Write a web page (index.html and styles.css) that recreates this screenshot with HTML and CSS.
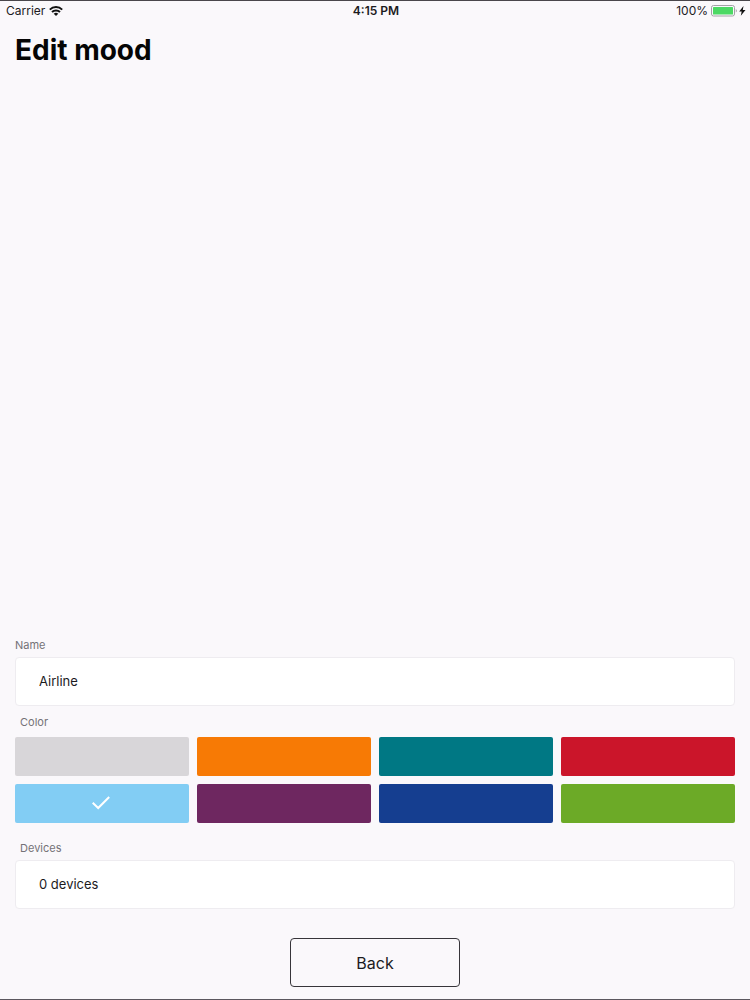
FILE: index.html
```html
<!DOCTYPE html>
<html lang="en">
<head>
<meta charset="utf-8">
<meta name="viewport" content="width=device-width, initial-scale=1">
<title>Edit mood</title>
<link rel="stylesheet" href="styles.css">
</head>
<body>
<div class="screen">
  <header class="status">
    <div class="status-left">
      <span>Carrier</span>
      <svg class="wifi" viewBox="0 0 14 10" aria-hidden="true">
        <path d="M.8 3.600a9 9 0 0 1 12.400 0M3 6a5.800 5.800 0 0 1 8 0" fill="none" stroke="currentColor" stroke-width="2"/>
        <path d="M4.700 7.700a3.400 3.400 0 0 1 4.600 0L7 10z" fill="currentColor"/>
      </svg>
    </div>
    <time class="clock">4:15 PM</time>
    <div class="status-right">
      <span>100%</span>
      <svg class="battery" viewBox="0 0 35 12" aria-hidden="true">
        <rect x=".5" y=".5" width="23" height="10.5" rx="2" fill="none" stroke="#a3a1a6"/>
        <rect x="2" y="2" width="20" height="7.5" rx=".5" fill="#4cd964"/>
        <path d="M24.800 4c1.200.5 1.200 3 0 3.500z" fill="#8d8b90"/>
        <path d="M32.500 1 28.200 6.600h2.500l-.9 4.200 4.700-5.900h-2.700z" fill="#111"/>
      </svg>
    </div>
  </header>

  <h1 class="title">Edit mood</h1>

  <form class="form">
    <label class="label" for="name">Name</label>
    <input class="field" id="name" type="text" value="Airline">

    <fieldset class="colors">
      <legend class="label label-inset">Color</legend>
      <div class="swatches">
        <input class="swatch gray" type="radio" name="color" aria-label="Gray">
        <input class="swatch orange" type="radio" name="color" aria-label="Orange">
        <input class="swatch teal" type="radio" name="color" aria-label="Teal">
        <input class="swatch red" type="radio" name="color" aria-label="Red">
        <div class="choice">
          <input class="swatch sky" type="radio" name="color" aria-label="Light blue" checked>
          <svg class="check" viewBox="0 0 18 14" aria-hidden="true">
            <path d="M.7 6.800 6.200 12 17.200 1" fill="none" stroke="#fff" stroke-width="2"/>
          </svg>
        </div>
        <input class="swatch purple" type="radio" name="color" aria-label="Purple">
        <input class="swatch blue" type="radio" name="color" aria-label="Blue">
        <input class="swatch green" type="radio" name="color" aria-label="Green">
      </div>
    </fieldset>

    <label class="label label-inset" for="devices">Devices</label>
    <button class="field" id="devices" type="button">0 devices</button>

    <button class="back" type="button">Back</button>
  </form>
</div>
</body>
</html>
```
FILE: styles.css
```css
* {
  box-sizing: border-box;
}

body {
  margin: 0;
  background: #faf8fb;
  color: #1c1b1e;
  font-family: Inter, "Liberation Sans", sans-serif;
}

.screen {
  display: flex;
  flex-direction: column;
  min-height: 100vh;
  border-top: 1px solid #49464b;
  border-bottom: 1px solid #5b575e;
}

.status {
  display: grid;
  grid-template-columns: 1fr auto 1fr;
  align-items: center;
  height: 20px;
  padding: 0 4px 0 6px;
  font-size: 12px;
  line-height: 16px;
}

.status-left,
.status-right {
  display: flex;
  align-items: center;
  gap: 4px;
}

.status-right {
  justify-content: flex-end;
  gap: 3px;
}

.wifi {
  width: 14px;
  height: 10px;
  color: #111;
}

.battery {
  width: 35px;
  height: 12px;
}

.clock {
  font-weight: 600;
}

.title {
  margin: 11px 15px 0;
  color: #050505;
  font-size: 28px;
  line-height: 36px;
  font-weight: 700;
}

.form {
  display: flex;
  flex-direction: column;
  margin-top: auto;
  padding: 0 15px 12px;
}

.label {
  display: block;
  padding: 0;
  margin-bottom: 4px;
  color: #747277;
  font-size: 11px;
  line-height: 16px;
}

.label-inset {
  margin-left: 5px;
}

.field {
  width: 100%;
  height: 49px;
  padding: 0 23px 2px;
  border: 1px solid #eeecf0;
  border-radius: 4px;
  background: #fff;
  color: #1c1b1e;
  font: inherit;
  font-size: 13px;
  text-align: left;
}

.colors {
  min-width: 0;
  margin: 8px 0 17px;
  padding: 0;
  border: 0;
}

.colors .label {
  margin-bottom: 7px;
}

.swatches {
  display: grid;
  grid-template-columns: repeat(4, 1fr);
  gap: 8px;
}

.swatch {
  display: block;
  appearance: none;
  width: 100%;
  height: 39px;
  margin: 0;
  border-radius: 2px;
}

.choice {
  position: relative;
}

.check {
  position: absolute;
  inset: 0 2px 2px 0;
  width: 18px;
  height: 14px;
  margin: auto;
  pointer-events: none;
}

.gray { background: #d8d6d9; }
.orange { background: #f77a05; }
.teal { background: #007884; }
.red { background: #cb152a; }
.sky { background: #82cdf4; }
.purple { background: #6e2760; }
.blue { background: #153e90; }
.green { background: #6caa27; }

.back {
  align-self: center;
  width: 170px;
  height: 49px;
  margin-top: 29px;
  border: 1px solid #37353a;
  border-radius: 4px;
  background: transparent;
  color: #1c1b1e;
  font: inherit;
  font-size: 16px;
}
```
